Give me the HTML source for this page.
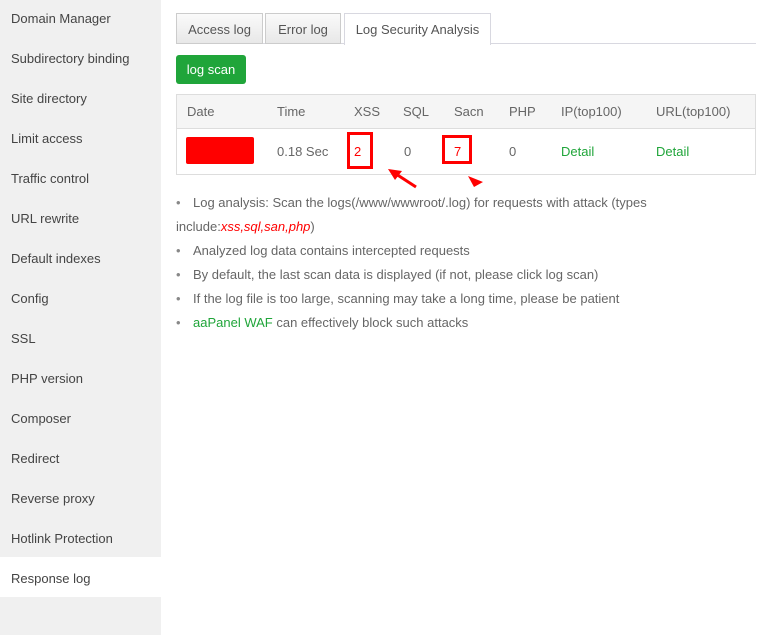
<!DOCTYPE html>
<html><head><style>
*{box-sizing:border-box;margin:0;padding:0}
body{width:776px;height:635px;background:#fff;font-family:"Liberation Sans",sans-serif;font-size:13px;color:#666;position:relative;overflow:hidden}
.side{position:absolute;left:0;top:0;width:161px;height:635px;background:#f0f0f0}
.side div{position:absolute;left:0;width:161px;height:40px;line-height:44px;padding-left:11px;color:#444;font-size:13px}
.side div.act{background:#fff}
.tab{position:absolute;top:13px;height:31px;line-height:31px;text-align:center;border:1px solid #ccc;background:linear-gradient(#fafafa,#e8e8e8);color:#555;font-size:13px}
.tab.on{background:#fff;border-color:#d8d8e0;border-bottom:none;height:32px}
.line{position:absolute;left:176px;top:43px;width:580px;height:1px;background:#d8d8e0}
.btn{position:absolute;left:176px;top:55px;width:70px;height:29px;background:#20a53a;color:#fff;border-radius:3px;line-height:29px;text-align:center;font-size:13px}
.tbl{position:absolute;left:176px;top:94px;width:580px;height:81px;border:1px solid #ddd}
.hd{position:absolute;left:0;top:0;width:578px;height:34px;background:#f5f5f5;border-bottom:1px solid #ddd}
.c{position:absolute;font-size:13px}
.g{color:#20a53a}
.notes{position:absolute;left:176px;top:191px;width:500px;line-height:24px;font-size:13px}
.notes p{position:relative;padding-left:17px}
.notes p:before{content:"•";position:absolute;left:0;color:#888}
</style></head><body>
<div class="side">
<div style="top:-3px">Domain Manager</div>
<div style="top:37px">Subdirectory binding</div>
<div style="top:77px">Site directory</div>
<div style="top:117px">Limit access</div>
<div style="top:157px">Traffic control</div>
<div style="top:197px">URL rewrite</div>
<div style="top:237px">Default indexes</div>
<div style="top:277px">Config</div>
<div style="top:317px">SSL</div>
<div style="top:357px">PHP version</div>
<div style="top:397px">Composer</div>
<div style="top:437px">Redirect</div>
<div style="top:477px">Reverse proxy</div>
<div style="top:517px">Hotlink Protection</div>
<div class="act" style="top:557px">Response log</div>
</div>
<div class="line"></div>
<div class="tab" style="left:176px;width:87px">Access log</div>
<div class="tab" style="left:265px;width:76px">Error log</div>
<div class="tab on" style="left:344px;width:147px">Log Security Analysis</div>
<div class="btn">log scan</div>
<div class="tbl">
<div class="hd"></div>
<div class="c" style="left:10px;top:9px">Date</div>
<div class="c" style="left:100px;top:9px">Time</div>
<div class="c" style="left:177px;top:9px">XSS</div>
<div class="c" style="left:226px;top:9px">SQL</div>
<div class="c" style="left:277px;top:9px">Sacn</div>
<div class="c" style="left:332px;top:9px">PHP</div>
<div class="c" style="left:384px;top:9px">IP(top100)</div>
<div class="c" style="left:479px;top:9px">URL(top100)</div>
<div style="position:absolute;left:9px;top:42px;width:68px;height:27px;background:#f00;border-radius:2px"></div>
<div class="c" style="left:100px;top:49px">0.18 Sec</div>
<div class="c" style="left:177px;top:49px;color:#f00">2</div>
<div class="c" style="left:227px;top:49px">0</div>
<div class="c" style="left:277px;top:49px;color:#f00">7</div>
<div class="c" style="left:332px;top:49px">0</div>
<div class="c g" style="left:384px;top:49px">Detail</div>
<div class="c g" style="left:479px;top:49px">Detail</div>
</div>
<div style="position:absolute;left:347px;top:132px;width:26px;height:37px;border:3px solid #f00"></div>
<div style="position:absolute;left:442px;top:135px;width:30px;height:29px;border:3px solid #f00"></div>
<svg style="position:absolute;left:0;top:0" width="776" height="635">
<line x1="416" y1="187" x2="396" y2="174" stroke="#f00" stroke-width="3"/>
<polygon points="388,169 402,171 395,180" fill="#f00"/>
<polygon points="468,176 483,182 474,187" fill="#f00"/>
</svg>
<div class="notes">
<p>Log analysis: Scan the logs(/www/wwwroot/.log) for requests with attack (types</p>
<div>include:<i style="color:#f00">xss,sql,san,php</i>)</div>
<p>Analyzed log data contains intercepted requests</p>
<p>By default, the last scan data is displayed (if not, please click log scan)</p>
<p>If the log file is too large, scanning may take a long time, please be patient</p>
<p><span class="g">aaPanel WAF</span> can effectively block such attacks</p>
</div>
</body></html>
